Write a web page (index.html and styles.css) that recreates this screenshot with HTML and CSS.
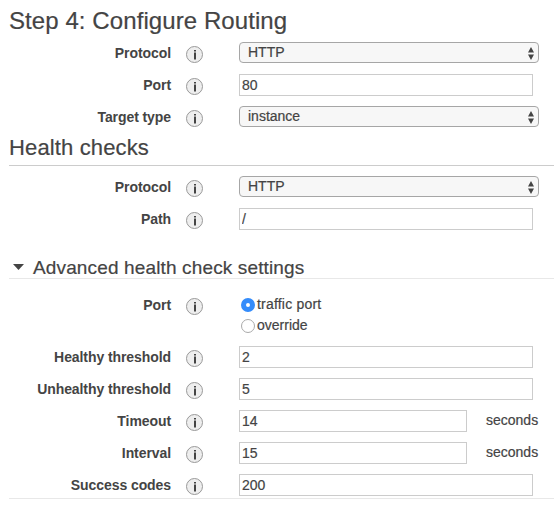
FILE: index.html
```html
<!DOCTYPE html>
<html lang="en">
<head>
<meta charset="utf-8">
<title>Step 4: Configure Routing</title>
<link rel="stylesheet" href="styles.css">
</head>
<body>
<svg class="defs" width="0" height="0" aria-hidden="true">
  <symbol id="info" viewBox="0 0 17 17">
    <circle cx="8.5" cy="8.5" r="8" fill="#eee" stroke="#999"/>
    <path d="M8 4h2v1.5h-2zM8 6.5h2v7h-2z" fill="#444"/>
  </symbol>
  <symbol id="updown" viewBox="0 0 6 13">
    <path d="M3 0l3 5.5H0zM3 13l3-5.5H0z" fill="#444"/>
  </symbol>
</svg>
<main class="page">
  <h1 class="title"><span>Step 4: Configure Routing</span></h1>
  <section class="fields">
    <div class="row"><label class="label">Protocol</label><svg class="info"><use href="#info"/></svg><div class="select"><span>HTTP</span><svg class="arrows"><use href="#updown"/></svg></div></div>
    <div class="row"><label class="label">Port</label><svg class="info"><use href="#info"/></svg><input class="input" value="80"></div>
    <div class="row"><label class="label">Target type</label><svg class="info"><use href="#info"/></svg><div class="select"><span>instance</span><svg class="arrows"><use href="#updown"/></svg></div></div>
  </section>
  <h2 class="heading"><span>Health checks</span></h2>
  <section class="fields health">
    <div class="row"><label class="label">Protocol</label><svg class="info"><use href="#info"/></svg><div class="select"><span>HTTP</span><svg class="arrows"><use href="#updown"/></svg></div></div>
    <div class="row"><label class="label">Path</label><svg class="info"><use href="#info"/></svg><input class="input" value="/"></div>
  </section>
  <h3 class="advanced"><svg class="caret" viewBox="0 0 11 6"><path d="M0 0h11L5.5 6z" fill="#444"/></svg><span>Advanced health check settings</span></h3>
  <section class="fields settings">
    <div class="row port"><label class="label">Port</label><svg class="info"><use href="#info"/></svg>
      <div class="radios">
        <label class="radio"><i class="dot on"></i><span class="wide">traffic port</span></label>
        <label class="radio"><i class="dot"></i><span>override</span></label>
      </div>
    </div>
    <div class="row"><label class="label">Healthy threshold</label><svg class="info"><use href="#info"/></svg><input class="input" value="2"></div>
    <div class="row"><label class="label">Unhealthy threshold</label><svg class="info"><use href="#info"/></svg><input class="input" value="5"></div>
    <div class="row"><label class="label">Timeout</label><svg class="info"><use href="#info"/></svg><input class="input short" value="14"><span class="unit">seconds</span></div>
    <div class="row"><label class="label">Interval</label><svg class="info"><use href="#info"/></svg><input class="input short" value="15"><span class="unit">seconds</span></div>
    <div class="row last"><label class="label">Success codes</label><svg class="info"><use href="#info"/></svg><input class="input" value="200"></div>
  </section>
</main>
</body>
</html>
```
FILE: styles.css
```css
* { box-sizing: border-box; }
body {
  margin: 0;
  background: #fff;
  color: #444;
  font: 14px/20px "Liberation Sans", Arial, sans-serif;
  -webkit-text-stroke: 0.2px #444;
}
.defs { display: block; height: 0; }
.page { padding-left: 9px; }
h1, h2, h3 { margin: 0; font-weight: 400; white-space: nowrap; }
.title { height: 42px; padding-top: 7px; font-size: 24px; line-height: 28px; letter-spacing: 0.08px; }
.heading {
  height: 28px;
  border-bottom: 1px solid #ccc;
  font-size: 22px;
  line-height: 20px;
  letter-spacing: 0.14px;
}
.fields { display: flex; flex-direction: column; }
.health { padding-top: 10px; }
.row { display: flex; align-items: flex-start; height: 32px; white-space: nowrap; }
.label {
  width: 162px;
  padding-top: 1px;
  text-align: right;
  font-weight: 700;
  letter-spacing: -0.08px;
  -webkit-text-stroke: 0;
}
.info { flex: none; width: 17px; height: 17px; margin: 4px 36px 0 15px; }
.select {
  display: flex;
  justify-content: space-between;
  align-items: center;
  width: 300px;
  height: 21px;
  padding: 0 4px 0 8px;
  border: 1px solid #a6a6a6;
  border-radius: 4px;
  background: #f7f7f7;
  line-height: 19px;
}
.arrows { width: 6px; height: 13px; margin-top: 1px; }
.input {
  width: 294px;
  height: 22px;
  margin: 0;
  padding: 0 2px;
  border: 1px solid #ccc;
  border-radius: 0;
  background: #fff;
  color: #444;
  font: inherit;
}
.input.short { width: 228px; }
.unit { margin-left: 19px; }
.advanced {
  display: flex;
  height: 39px;
  padding: 17px 0 0 4px;
  border-bottom: 1px solid #e8e8e8;
  font-size: 19px;
  line-height: 22px;
  letter-spacing: 0.14px;
}
.caret { width: 11px; height: 6px; margin: 7px 9px 0 0; }
.settings { padding-top: 15px; border-bottom: 1px solid #e8e8e8; }
.port { height: 52px; }
.radios { padding-left: 2px; }
.radio { display: flex; height: 21px; gap: 2px; }
.wide { letter-spacing: 0.2px; }
.dot { width: 14px; height: 14px; margin-top: 4px; border: 1px solid #aaa; border-radius: 50%; background: #fff; }
.dot.on { border: 5px solid #348cfb; }
.last { height: 24px; }
```
